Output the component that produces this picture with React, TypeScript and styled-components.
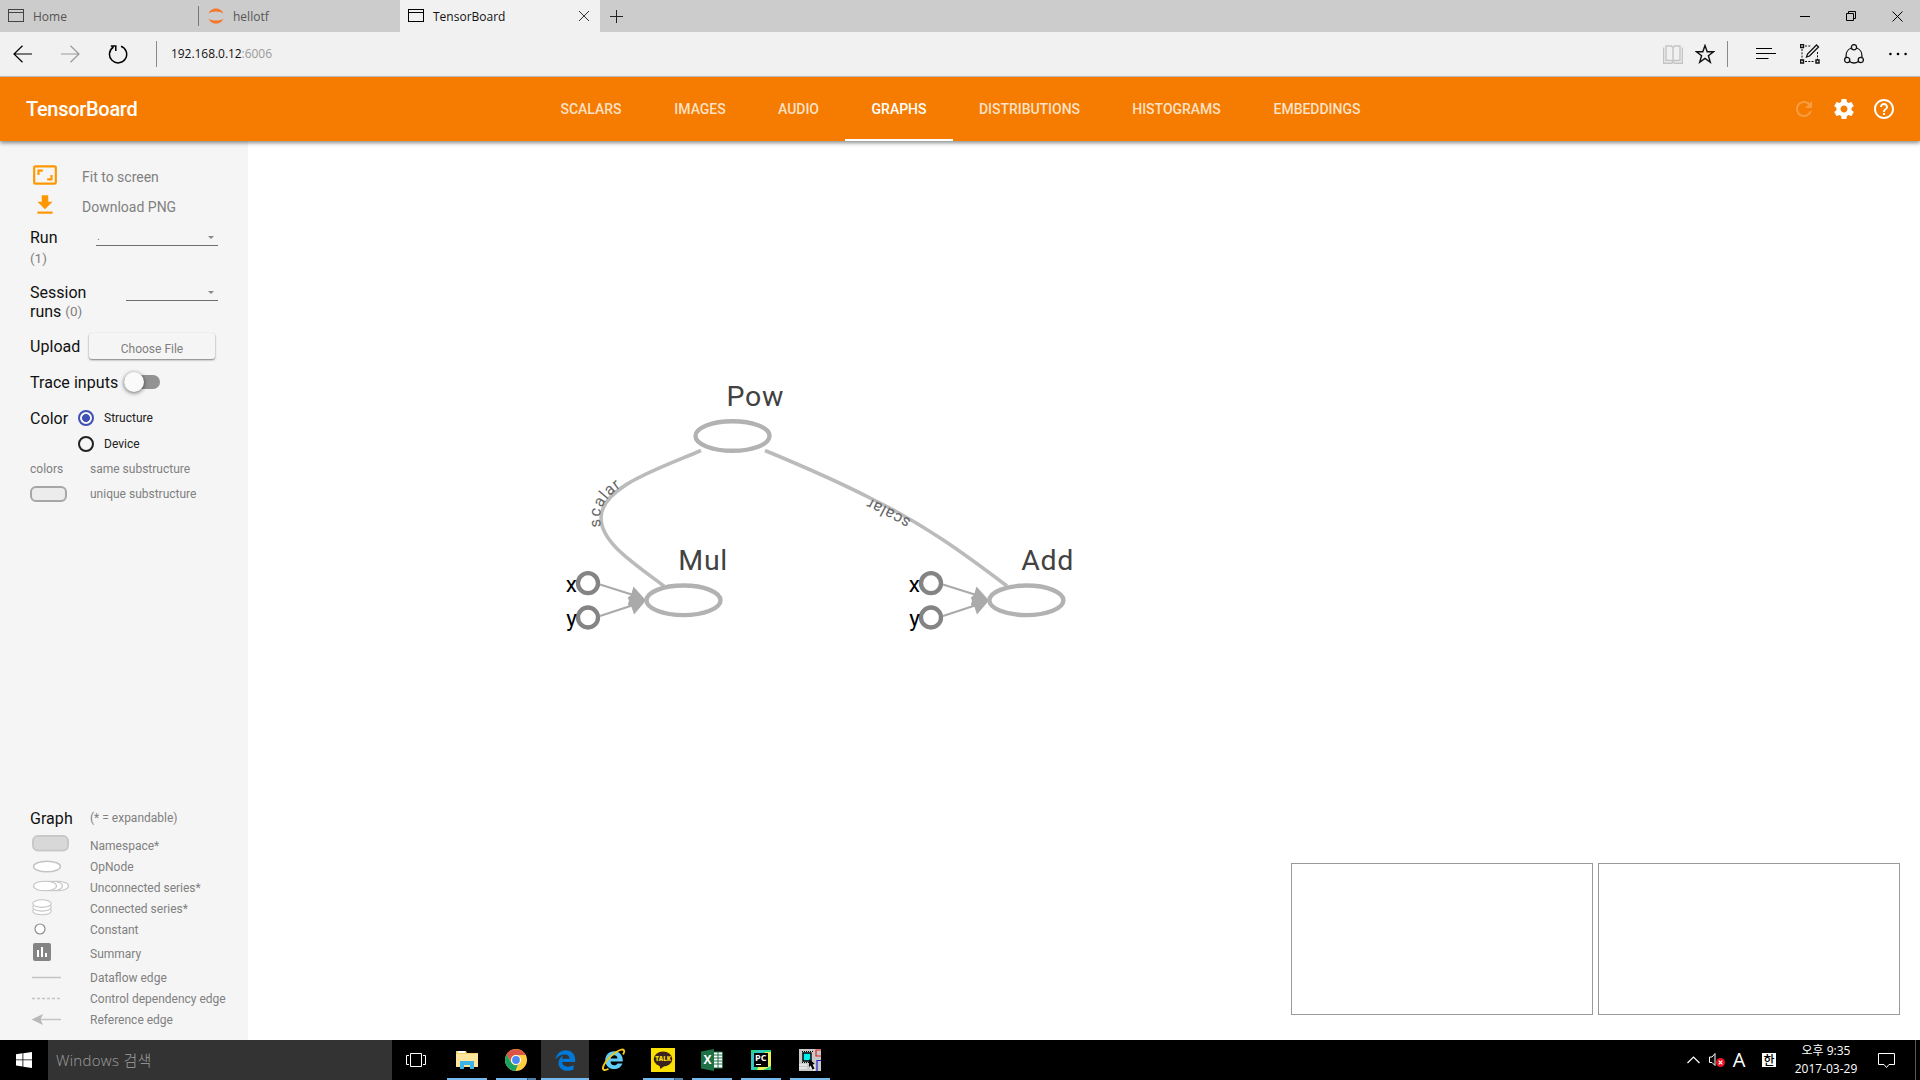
import React from 'react';
import styled, { createGlobalStyle } from 'styled-components';

const Global = createGlobalStyle`
  body { margin: 0; background: #fff; overflow: hidden; }
  * { box-sizing: border-box; }
  svg { display: block; flex: none; }
`;

const chromeFont = `"Open Sans", "Noto Sans CJK KR", sans-serif`;

const Screen = styled.div`
  width: 1920px;
  height: 1080px;
  display: flex;
  flex-direction: column;
  font-family: Roboto, sans-serif;
`;

/* ---------- browser ---------- */
const TabStrip = styled.div`
  height: 32px;
  display: flex;
  background: #cccccc;
  font: 12px ${chromeFont};
`;
const BrowserTab = styled.div<{ $active?: boolean; $w?: number }>`
  width: ${p => p.$w ?? 200}px;
  height: 32px;
  padding: 0 11px 0 8px;
  display: flex;
  align-items: center;
  gap: 9px;
  color: ${p => (p.$active ? '#111' : '#555')};
  background: ${p => (p.$active ? '#f1f1f1' : 'transparent')};
`;
const TabLabel = styled.span`
  flex: 1;
  line-height: 33px;
`;
const TabDivider = styled.div`
  width: 1px;
  height: 20px;
  margin: 6px 1px 0 0;
  background: #777;
`;
const NewTab = styled.div`
  padding: 9px 0 0 10px;
`;
const WindowButtons = styled.div`
  margin-left: auto;
  display: flex;
`;
const WindowButton = styled.div`
  width: 46px;
  height: 32px;
  display: flex;
  align-items: center;
  justify-content: center;
`;

const AddressBar = styled.div`
  height: 45px;
  display: flex;
  align-items: center;
  background: #f1f1f1;
  border-bottom: 1px solid #c4c4c8;
  font: 12px ${chromeFont};
`;
const NavButton = styled.div<{ $w: number }>`
  width: ${p => p.$w}px;
  display: flex;
  justify-content: center;
`;
const BarDivider = styled.div`
  width: 1px;
  height: 26px;
  background: #8a8a8a;
`;
const Url = styled.div`
  flex: 1;
  padding: 0 0 1px 14px;
  letter-spacing: -0.05px;
  color: #111;
  span { color: #999; }
`;

/* ---------- app header ---------- */
const Header = styled.header`
  position: relative;
  z-index: 1;
  height: 64px;
  display: flex;
  flex: none;
  align-items: center;
  background: #f57c00;
  color: #fff;
  box-shadow: 0 2px 4px rgba(0, 0, 0, 0.45);
`;
const Brand = styled.h1`
  width: 534px;
  margin: 0;
  padding-left: 26px;
  font-size: 20px;
  font-weight: 500;
  letter-spacing: -0.3px;
`;
const Tabs = styled.nav`
  display: flex;
  height: 64px;
  flex: 1;
`;
const Tab = styled.div<{ $w: number; $active?: boolean }>`
  width: ${p => p.$w}px;
  height: 64px;
  display: flex;
  align-items: center;
  justify-content: center;
  font-size: 14px;
  font-weight: 500;
  letter-spacing: -0.03px;
  color: ${p => (p.$active ? '#fff' : 'rgba(255,255,255,.78)')};
  border-top: 2px solid transparent;
  border-bottom: 2px solid ${p => (p.$active ? '#fff' : 'transparent')};
`;
const HeaderActions = styled.div`
  display: flex;
  gap: 16px;
  padding-right: 24px;
`;

/* ---------- body ---------- */
const Body = styled.main`
  height: 899px;
  display: flex;
`;
const Sidebar = styled.aside`
  width: 248px;
  height: 899px;
  padding: 19px 0 10px 30px;
  display: flex;
  flex-direction: column;
  background: #f5f5f5;
  color: #111;
  font-size: 16px;
`;
const ActionRow = styled.div<{ $h: number }>`
  height: ${p => p.$h}px;
  display: flex;
  align-items: center;
  font-size: 14px;
  color: #808080;
  svg { margin: 0 24px 0 2px; }
  span { padding-top: 4px; }
`;
const SelectRow = styled.div<{ $mt: number; $lh: number }>`
  margin-top: ${p => p.$mt}px;
  width: 188px;
  display: flex;
  justify-content: space-between;
  line-height: ${p => p.$lh}px;
`;
const SelectLabel = styled.div`
  width: 64px;
`;
const LabelLine = styled.div`
  display: flex;
  gap: 4px;
`;
const Muted = styled.span`
  color: #808080;
  font-size: 13.5px;
`;
const Dropdown = styled.div<{ $w: number }>`
  width: ${p => p.$w}px;
  height: 18px;
  padding: 1px 4px 0 1px;
  display: flex;
  justify-content: space-between;
  align-items: center;
  border-bottom: 1px solid #6f6f6f;
  font-size: 11px;
  color: #777;
`;
const Caret = styled.i`
  border: 3.5px solid transparent;
  border-top-color: #8a8a8a;
  border-bottom: 0;
`;
const ControlRow = styled.div<{ $mt: number; $h: number }>`
  margin-top: ${p => p.$mt}px;
  height: ${p => p.$h}px;
  display: flex;
  align-items: center;
`;
const ControlLabel = styled.span<{ $w: number }>`
  width: ${p => p.$w}px;
  white-space: nowrap;
  letter-spacing: 0.05px;
`;
const FileButton = styled.div`
  width: 126px;
  height: 26px;
  padding: 5px 0 0 0;
  border-radius: 3px;
  background: #f5f5f5;
  box-shadow: 0 1px 2px rgba(0, 0, 0, 0.5);
  display: flex;
  align-items: center;
  justify-content: center;
  font-size: 12px;
  color: #808080;
`;
const Toggle = styled.div`
  width: 36px;
  height: 14px;
  border-radius: 7px;
  background: #929292;
  display: flex;
  align-items: center;
`;
const Knob = styled.div`
  width: 20px;
  height: 20px;
  border-radius: 50%;
  background: #fafafa;
  box-shadow: 0 1px 4px rgba(0, 0, 0, 0.6);
`;
const Radio = styled.div<{ $on?: boolean }>`
  width: 16px;
  height: 16px;
  border-radius: 50%;
  border: 2px solid ${p => (p.$on ? '#3f51b5' : '#212121')};
  background: ${p => (p.$on ? 'radial-gradient(circle, #3f51b5 3.6px, transparent 4.3px)' : 'transparent')};
`;
const RadioLabel = styled.span`
  margin-left: 10px;
  font-size: 12px;
  color: #212121;
`;
const Note = styled.span<{ $w?: number }>`
  width: ${p => (p.$w ? `${p.$w}px` : 'auto')};
  font-size: 12px;
  color: #808080;
`;
const Swatch = styled.div`
  width: 37px;
  height: 16px;
  margin-right: 23px;
  border: 2px solid #a6a6a6;
  border-radius: 6px;
  background: #ececec;
`;
const Legend = styled.div`
  margin-top: auto;
`;
const LegendTitle = styled.div`
  height: 20px;
  margin-bottom: 7px;
  display: flex;
  align-items: center;
`;
const LegendRow = styled.div<{ $h?: number }>`
  height: ${p => p.$h ?? 21}px;
  display: flex;
  align-items: center;
  font-size: 12px;
  color: #808080;
  svg { margin-right: 14px; }
`;

const Canvas = styled.section`
  flex: 1;
  display: grid;
  background: #fff;
  > * { grid-area: 1 / 1; }
`;
const Minimaps = styled.div`
  align-self: end;
  justify-self: end;
  display: flex;
  gap: 5px;
  margin: 0 20px 25px 0;
`;
const Minimap = styled.div`
  width: 302px;
  height: 152px;
  border: 1px solid #999;
`;

/* ---------- taskbar ---------- */
const Taskbar = styled.footer`
  height: 40px;
  display: flex;
  background: #000;
  font-family: ${chromeFont};
`;
const Start = styled.div`
  width: 48px;
  display: flex;
  align-items: center;
  justify-content: center;
`;
const Search = styled.div`
  width: 344px;
  padding-left: 8px;
  background: #333;
  color: #a0a0a0;
  font: 300 15px/40px ${chromeFont};
  letter-spacing: 0.3px;
`;
const Apps = styled.div`
  display: flex;
  gap: 1px;
`;
const App_ = styled.div<{ $active?: boolean }>`
  width: 48px;
  height: 40px;
  display: flex;
  flex-direction: column;
  align-items: center;
  justify-content: space-between;
  background: ${p => (p.$active ? '#333' : 'transparent')};
`;
const AppIcon = styled.div`
  height: 38px;
  display: flex;
  align-items: center;
  padding-top: 2px;
`;
const Underline = styled.div<{ $kind: 'none' | 'one' | 'many' | 'full' }>`
  height: 2px;
  width: ${p => (p.$kind === 'full' ? 48 : 40)}px;
  background: ${p =>
    p.$kind === 'none' ? 'transparent'
      : p.$kind === 'many' ? 'linear-gradient(90deg, #76b9ed 31px, #33516a 31px 32px, #5080a8 32px)'
      : '#76b9ed'};
`;
const Tray = styled.div`
  margin-left: auto;
  display: flex;
  align-items: center;
  color: #fff;
`;
const TraySlot = styled.div<{ $w: number }>`
  width: ${p => p.$w}px;
  display: flex;
  justify-content: center;
`;
const Latin = styled.span`
  font-size: 20px;
  line-height: 38px;
`;
const Hangul = styled.span`
  width: 14px;
  height: 14px;
  background: #fff;
  color: #000;
  font: 500 12px/13px "Noto Sans CJK KR", sans-serif;
  text-align: center;
`;
const Clock = styled.div`
  font-size: 12px;
  line-height: 18px;
  padding: 0 0 1px 4px;
  text-align: center;
  white-space: nowrap;
`;
const DesktopEdge = styled.div`
  width: 5px;
  height: 40px;
  margin-left: 2px;
  border-left: 1px solid #555;
`;

const Mi = ({ d, size = 24, fill = '#fff', opacity = 1 }: { d: string; size?: number; fill?: string; opacity?: number }) => (
  <svg width={size} height={size} viewBox="0 0 24 24" fill={fill} opacity={opacity}><path d={d} /></svg>
);

const ICONS = {
  refresh: 'M17.65 6.35C16.2 4.9 14.21 4 12 4c-4.42 0-7.99 3.58-7.99 8s3.57 8 7.99 8c3.73 0 6.84-2.55 7.73-6h-2.08c-.82 2.33-3.04 4-5.65 4-3.31 0-6-2.69-6-6s2.69-6 6-6c1.66 0 3.14.69 4.22 1.78L13 11h7V4l-2.35 2.35z',
  settings: 'M19.43 12.98c.04-.32.07-.64.07-.98s-.03-.66-.07-.98l2.11-1.65c.19-.15.24-.42.12-.64l-2-3.46c-.12-.22-.39-.3-.61-.22l-2.49 1c-.52-.4-1.08-.73-1.69-.98l-.38-2.65C14.46 2.18 14.25 2 14 2h-4c-.25 0-.46.18-.49.42l-.38 2.65c-.61.25-1.17.59-1.69.98l-2.49-1c-.23-.09-.49 0-.61.22l-2 3.46c-.13.22-.07.49.12.64l2.11 1.65c-.04.32-.07.65-.07.98s.03.66.07.98l-2.11 1.65c-.19.15-.24.42-.12.64l2 3.46c.12.22.39.3.61.22l2.49-1c.52.4 1.08.73 1.69.98l.38 2.65c.03.24.24.42.49.42h4c.25 0 .46-.18.49-.42l.38-2.65c.61-.25 1.17-.59 1.69-.98l2.49 1c.23.09.49 0 .61-.22l2-3.46c.12-.22.07-.49-.12-.64l-2.11-1.65zM12 15.5c-1.93 0-3.5-1.57-3.5-3.5s1.57-3.5 3.5-3.5 3.5 1.57 3.5 3.5-1.57 3.5-3.5 3.5z',
  help: 'M11 18h2v-2h-2v2zm1-16C6.48 2 2 6.48 2 12s4.48 10 10 10 10-4.48 10-10S17.52 2 12 2zm0 18c-4.41 0-8-3.59-8-8s3.59-8 8-8 8 3.59 8 8-3.59 8-8 8zm0-14c-2.21 0-4 1.79-4 4h2c0-1.1.9-2 2-2s2 .9 2 2c0 2-3 1.75-3 5h2c0-2.25 3-2.5 3-5 0-2.21-1.79-4-4-4z',
  fit: 'M19 12h-2v3h-3v2h5v-5zM7 9h3V7H5v5h2V9zm14-6H3c-1.1 0-2 .9-2 2v14c0 1.1.9 2 2 2h18c1.1 0 2-.9 2-2V5c0-1.1-.9-2-2-2zm0 16.01H3V4.99h18v14.02z',
  download: 'M19 9h-4V3H9v6H5l7 7 7-7zM5 18v2h14v-2H5z',
};

const PageIcon = ({ color }: { color: string }) => (
  <svg width="16" height="14" viewBox="0 0 16 14" fill="none" stroke={color}>
    <rect x=".5" y=".5" width="15" height="12" /><path d="M0 3.5h16" />
  </svg>
);
const JupyterIcon = () => (
  <svg width="16" height="16" viewBox="0 0 16 16" fill="#f37726">
    <path d="M.6 5.6C1.6 2.6 4.5.4 8 .4s6.400 2.200 7.400 5.200C13.900 4.200 11.200 3.400 8 3.400S2.100 4.200.6 5.600zM.6 10.400c1 3 3.900 5.200 7.400 5.200s6.400-2.200 7.400-5.200c-1.500 1.400-4.200 2.200-7.400 2.200s-5.900-.8-7.400-2.200z" />
  </svg>
);
const Arrow = ({ flip, color }: { flip?: boolean; color: string }) => (
  <svg width="20" height="18" viewBox="0 0 20 18" fill="none" stroke={color} strokeWidth="1.2" transform={flip ? 'scale(-1 1)' : undefined}>
    <path d="M1 9h18M9.500.7L1 9l8.500 8.300" />
  </svg>
);

const GraphNode = ({ x, y, label, lx, ly }: { x: number; y: number; label: string; lx: number; ly: number }) => (
  <g>
    <ellipse cx={x} cy={y} rx="37" ry="14.800" fill="#fff" stroke="#b2b2b2" strokeWidth="4.400" />
    <text x={lx} y={ly} fontSize="28.500" letterSpacing="0.700" fill="#424242">{label}</text>
  </g>
);
const Inputs = ({ x }: { x: number }) => (
  <g transform={`translate(${x} 0)`}>
    <g stroke="#aaa" strokeWidth="2.200">
      <path d="M12 584.500L50 596.500M12 616L50 603.500" />
    </g>
    <path d="M45.500 586.500L58 600.500 46 614.500 43.500 607 39.800 605 41 600.500 39.800 597.500 43 595z" fill="#aaa" />
    {[['x', 583.200], ['y', 617.500]].map(([t, cy]) => (
      <g key={t}>
        <circle cx="0" cy={cy} r="10" fill="#fff" stroke="#848484" strokeWidth="4.300" />
        <text x="-11" y={Number(cy) + 8.300} fontSize="22.500" textAnchor="end" fill="#000">{t}</text>
      </g>
    ))}
  </g>
);

const legendIcon: Record<string, React.ReactNode> = {
  'Namespace*': <rect x="3" y="1" width="35" height="14.500" rx="5" fill="#d8d8d8" stroke="#c8c8c8" strokeWidth="2" />,
  OpNode: <ellipse cx="17" cy="10.500" rx="13.500" ry="5.300" fill="#fff" stroke="#c4c4c4" strokeWidth="1.400" />,
  'Unconnected series*': (
    <g fill="#fff" stroke="#c4c4c4" strokeWidth="1.100">
      <ellipse cx="27" cy="9" rx="11.500" ry="4.800" /><ellipse cx="21.500" cy="9" rx="11" ry="4.800" /><ellipse cx="15" cy="9" rx="11.500" ry="4.800" />
    </g>
  ),
  'Connected series*': (
    <g fill="#fff" stroke="#c4c4c4" strokeWidth="1.100">
      <ellipse cx="12" cy="13" rx="9.300" ry="3.800" /><ellipse cx="12" cy="9.300" rx="9.300" ry="3.800" /><ellipse cx="12" cy="5.600" rx="9.300" ry="3.800" />
    </g>
  ),
  Constant: <circle cx="10" cy="10" r="5" fill="#fff" stroke="#8c8c8c" strokeWidth="1.200" />,
  Summary: (
    <g transform="translate(0 -1.5)">
      <rect x="3" y="1.500" width="18" height="18" rx="2" fill="#848484" /><path d="M7 8.500h2v7H7zM11 5.500h2v10h-2zM15 11.500h2v4h-2z" fill="#fff" />
    </g>
  ),
  'Dataflow edge': <path d="M2 10.500h29" stroke="#c4c4c4" strokeWidth="1.500" />,
  'Control dependency edge': <path d="M2 10.500h29" stroke="#c4c4c4" strokeWidth="1.500" strokeDasharray="3 2" />,
  'Reference edge': <g><path d="M8 10.500h23" stroke="#c4c4c4" strokeWidth="1.500" /><path d="M1.500 10.500L13 5l-2.500 5.500L13 16z" fill="#b8b8b8" /></g>,
};

const apps: { name: string; kind: 'none' | 'one' | 'many' | 'full'; icon: React.ReactNode }[] = [
  { name: 'explorer', kind: 'one', icon: (
    <svg width="22" height="20" viewBox="0 0 22 20">
      <path d="M0 1h10l1 2h11v14H0z" fill="#f5cf6b" /><path d="M2 1h7v2H2z" fill="#fff" /><path d="M0 4h22v13H0z" fill="#fde59b" />
      <path d="M4 11h14v8h-4v-4H8v4H4z" fill="#3db4e7" />
    </svg>) },
  { name: 'chrome', kind: 'many', icon: (
    <svg width="22" height="22" viewBox="0 0 22 22">
      <circle cx="11" cy="11" r="11" fill="#ffcd40" />
      <path d="M1.500 5.500A11 11 0 0 1 20.600 6H11a5 5 0 0 0-4.700 6.700z" fill="#de5347" />
      <path d="M1.500 5.500l4.900 8a5 5 0 0 0 6.500 2L10.400 22A11 11 0 0 1 1.500 5.500z" fill="#1aa260" />
      <circle cx="11" cy="11" r="5" fill="#fff" /><circle cx="11" cy="11" r="3.900" fill="#4a89f3" />
    </svg>) },
  { name: 'edge', kind: 'full', icon: (
    <svg width="21" height="21" viewBox="0 0 21 21" fill="#0078d7">
      <path d="M.6 9.600C1.200 4 5.300.3 10.800.3c5.800 0 9.400 4 9.400 9.200v2.600H7.200c.2 3 2.700 4.600 5.800 4.600 2.100 0 4-.5 5.700-1.600v4.200c-1.900 1-4.100 1.500-6.500 1.500-5 0-8.700-3-8.700-7.800 0-3.500 1.900-6.100 4.900-7.400-.7.800-1.200 1.900-1.300 3.100h7.300c0-2.500-1.400-4.200-4.300-4.200C6 4.500 2.600 6.400.6 9.600z" />
    </svg>) },
  { name: 'ie', kind: 'none', icon: (
    <svg width="24" height="24" viewBox="0 0 24 24">
      <path d="M12 3.300c-5 0-8.800 3.900-8.800 8.900s3.800 8.900 8.900 8.900c4 0 7.100-2.200 8.300-5.700h-5c-.6 1.200-1.700 1.900-3.200 1.900-2.100 0-3.600-1.400-3.700-3.700h12.300c.4-6-3-10.300-8.800-10.300zM8.600 10.400c.3-2 1.700-3.200 3.500-3.200s3.200 1.200 3.400 3.200z" fill="#5fcdf7" />
      <path d="M21 6.500C23 3.500 22.500 1 19.500 1.600 13 3 2 13.500 1 19.500c-.5 3.500 3 2.800 5.500 1.200" fill="none" stroke="#f5c518" strokeWidth="1.900" />
    </svg>) },
  { name: 'talk', kind: 'many', icon: (
    <svg width="24" height="24" viewBox="0 0 24 24">
      <path d="M0 0h24v24H0z" fill="#fae100" /><ellipse cx="12" cy="11" rx="9.300" ry="7.600" fill="#3b2220" /><path d="M8 16l1.500 5 5-4z" fill="#3b2220" />
      <text x="12" y="13.300" fontSize="6" fontWeight="800" textAnchor="middle" fill="#fae100">TALK</text>
    </svg>) },
  { name: 'excel', kind: 'one', icon: (
    <svg width="22" height="22" viewBox="0 0 22 22">
      <path d="M12 3h9.500v16H12z" fill="#fff" stroke="#1e7145" /><path d="M13 6h8M13 9h8M13 12h8M13 15h8M17 3v16" stroke="#1e7145" />
      <path d="M0 2.500L13 0v22L0 19.500z" fill="#1e7145" /><text x="6.500" y="15" fontSize="12" fontWeight="700" textAnchor="middle" fill="#fff">X</text>
    </svg>) },
  { name: 'pycharm', kind: 'one', icon: (
    <svg width="20" height="20" viewBox="0 0 20 20">
      <path d="M0 0h20v20H0z" fill="#21d789" /><path d="M14 2h6v14l-8 4H6z" fill="#e9f25a" /><path d="M0 4l8-4h6L3 20H0z" fill="#3bc6c0" /><path d="M3 3h14v14H3z" fill="#000" />
      <text x="4" y="11.300" fontSize="9" fontWeight="700" fill="#fff">PC</text><path d="M5 14.500h5" stroke="#fff" />
    </svg>) },
  { name: 'circuit', kind: 'one', icon: (
    <svg width="22" height="22" viewBox="0 0 22 22">
      <path d="M0 0h22v22H0z" fill="#c9c9c9" /><path d="M0 16h8M0 19h8M12 2v18M15 14v8" stroke="#fff" />
      <path d="M4 4h8v8H4z" fill="#00f0f0" stroke="#000" strokeWidth="1.500" /><path d="M3 2.500h11M3 13.500h9" stroke="#000" strokeDasharray="1 1" />
      <path d="M22 1h-5v6h5" fill="none" stroke="#e02020" strokeWidth="1.200" /><path d="M22 11.500h-4V22" fill="none" stroke="#2020d0" strokeWidth="1.200" />
      <path d="M10 10l6 5-2.500.5 2 4-2 1-1.800-4L10 18z" fill="#000" />
    </svg>) },
];

const tabs: [string, number][] = [
  ['SCALARS', 114], ['IMAGES', 104], ['AUDIO', 93], ['GRAPHS', 108], ['DISTRIBUTIONS', 153], ['HISTOGRAMS', 141], ['EMBEDDINGS', 140],
];

export default function App() {
  return (
    <Screen>
      <Global />
      <TabStrip>
        <BrowserTab $w={198}><PageIcon color="#444" /><TabLabel>Home</TabLabel></BrowserTab>
        <TabDivider />
        <BrowserTab><JupyterIcon /><TabLabel>hellotf</TabLabel></BrowserTab>
        <BrowserTab $active>
          <PageIcon color="#000" /><TabLabel>TensorBoard</TabLabel>
          <svg width="10" height="10" viewBox="0 0 10 10" stroke="#333"><path d="M0 0l10 10M10 0L0 10" /></svg>
        </BrowserTab>
        <NewTab><svg width="13" height="14" viewBox="0 0 13 14" stroke="#222"><path d="M0 7.500h13M6.500 1v13" /></svg></NewTab>
        <WindowButtons>
          <WindowButton><svg width="10" height="10" stroke="#000"><path d="M0 5.500h10" /></svg></WindowButton>
          <WindowButton><svg width="10" height="10" stroke="#000" fill="none"><path d="M.5 2.500h7v7h-7zM2.500 2.500v-2h7v7h-2" /></svg></WindowButton>
          <WindowButton><svg width="11" height="11" stroke="#000"><path d="M.5.5l10 10M10.500.5l-10 10" /></svg></WindowButton>
        </WindowButtons>
      </TabStrip>

      <AddressBar>
        <NavButton $w={45}><Arrow color="#000" /></NavButton>
        <NavButton $w={49}><Arrow flip color="#999" /></NavButton>
        <NavButton $w={48}>
          <svg width="20" height="20" viewBox="0 0 20 20" fill="none" stroke="#000" strokeWidth="1.500">
            <path d="M13 2.200A8.600 8.600 0 1 1 5.500 3M2.800 2h5v5" />
          </svg>
        </NavButton>
        <NavButton $w={14} />
        <BarDivider />
        <Url>192.168.0.12<span>:6006</span></Url>
        <NavButton $w={32}>
          <svg width="20" height="19" viewBox="0 0 20 19" fill="none" stroke="#c4c4c4" strokeWidth="1.400">
            <path d="M.6 2.500v15.800h8l1.400-.8 1.400.8h8V2.500M3 1h5.500L10 2.500 11.500 1H17v14.500h-5.500L10 16.800l-1.500-1.300H3zM10 2.500v15" />
          </svg>
        </NavButton>
        <NavButton $w={32}>
          <svg width="20" height="20" viewBox="0 0 20 20" fill="none" stroke="#111" strokeWidth="1.400">
            <path d="M10 1.500l2.200 6.200h6.300l-5.100 4 1.900 6.500L10 14.400l-5.300 3.800 1.900-6.500-5.100-4h6.300z" />
          </svg>
        </NavButton>
        <NavButton $w={6} />
        <BarDivider />
        <NavButton $w={16} />
        <NavButton $w={44}>
          <svg width="20" height="14" viewBox="0 0 20 14" stroke="#000" strokeWidth="1.200"><path d="M0 1.500h16M0 6.500h20M0 11.500h12.500" /></svg>
        </NavButton>
        <NavButton $w={44}>
          <svg width="20" height="20" viewBox="0 0 20 20" fill="none" stroke="#111">
            <path d="M2 5v11M17.500 8v8M5 2h6M5 17.500h10" strokeDasharray="2 1.300" />
            <path d="M.5.5h3v3h-3zM.5 16h3v3h-3zM16 16h3v3h-3z" strokeWidth="1.400" />
            <path d="M6.500 13l1-3L16.500 1l2 2-9 9z" strokeWidth="1.300" />
          </svg>
        </NavButton>
        <NavButton $w={44}>
          <svg width="20" height="20" viewBox="0 0 20 20" fill="none" stroke="#111" strokeWidth="1.300">
            <circle cx="10" cy="3.200" r="2.600" /><circle cx="3.200" cy="16" r="2.600" /><circle cx="16.800" cy="16" r="2.600" />
            <path d="M7.400 4C3.800 5.300 1.500 9 2.200 13.400M12.600 4c3.600 1.300 5.900 5 5.200 9.400M5.500 17.500q4.500 3 9 0" />
          </svg>
        </NavButton>
        <NavButton $w={44}>
          <svg width="18" height="4" viewBox="0 0 18 4"><circle cx="1.400" cy="2" r="1.300" /><circle cx="9" cy="2" r="1.300" /><circle cx="16.600" cy="2" r="1.300" /></svg>
        </NavButton>
      </AddressBar>

      <Header>
        <Brand>TensorBoard</Brand>
        <Tabs>{tabs.map(([t, w]) => <Tab key={t} $w={w} $active={t === 'GRAPHS'}>{t}</Tab>)}</Tabs>
        <HeaderActions>
          <Mi d={ICONS.refresh} opacity={0.25} />
          <Mi d={ICONS.settings} />
          <Mi d={ICONS.help} />
        </HeaderActions>
      </Header>

      <Body>
        <Sidebar>
          <ActionRow $h={30}><Mi d={ICONS.fit} size={26} fill="#ff9800" /><span>Fit to screen</span></ActionRow>
          <ActionRow $h={30}><Mi d={ICONS.download} size={26} fill="#ff9800" /><span>Download PNG</span></ActionRow>
          <SelectRow $mt={8} $lh={20}>
            <SelectLabel>
              <LabelLine>Run</LabelLine>
              <LabelLine><Muted>(1)</Muted></LabelLine>
            </SelectLabel>
            <Dropdown $w={122}>.<Caret /></Dropdown>
          </SelectRow>
          <SelectRow $mt={15} $lh={19}>
            <SelectLabel>
              <LabelLine>Session</LabelLine>
              <LabelLine>runs <Muted>(0)</Muted></LabelLine>
            </SelectLabel>
            <Dropdown $w={92}><span /><Caret /></Dropdown>
          </SelectRow>
          <ControlRow $mt={11} $h={28}><ControlLabel $w={59}>Upload</ControlLabel><FileButton>Choose File</FileButton></ControlRow>
          <ControlRow $mt={12} $h={20}><ControlLabel $w={94}>Trace inputs</ControlLabel><Toggle><Knob /></Toggle></ControlRow>
          <ControlRow $mt={16} $h={20}><ControlLabel $w={48}>Color</ControlLabel><Radio $on /><RadioLabel>Structure</RadioLabel></ControlRow>
          <ControlRow $mt={6} $h={20}><ControlLabel $w={48} /><Radio /><RadioLabel>Device</RadioLabel></ControlRow>
          <ControlRow $mt={5} $h={20}><Note $w={60}>colors</Note><Note>same substructure</Note></ControlRow>
          <ControlRow $mt={5} $h={20}><Swatch /><Note>unique substructure</Note></ControlRow>
          <Legend>
            <LegendTitle><ControlLabel $w={60}>Graph</ControlLabel><Note>(* = expandable)</Note></LegendTitle>
            {Object.entries(legendIcon).map(([t, icon]) => (
              <LegendRow key={t} $h={t === 'Summary' ? 27 : 21}>
                <svg width="46" height="21" viewBox="0 0 46 21" overflow="visible">{icon}</svg>{t}
              </LegendRow>
            ))}
          </Legend>
        </Sidebar>
        <Canvas>
          <svg width="1672" height="899" viewBox="248 141 1672 899">
            <g fill="none" stroke="#bbb" strokeWidth="3.600">
              <path id="edge-mul" d="M664 586C632 562 601 542 601 518C601 487 658 469 701 450.500" />
              <path id="edge-add" d="M1007 586C962 552 925 525 872 499C837 481 800 465 765 450.500" />
            </g>
            <g fontSize="16" letterSpacing="0.700" fill="#666" textAnchor="middle">
              <text dy="-1"><textPath href="#edge-mul" startOffset="50%">scalar</textPath></text>
              <text><textPath href="#edge-add" startOffset="50.300%">scalar</textPath></text>
            </g>
            <Inputs x={588} />
            <Inputs x={931} />
            <GraphNode x={732.5} y={436} label="Pow" lx={726.500} ly={406} />
            <GraphNode x={683.5} y={600.300} label="Mul" lx={678.300} ly={570} />
            <GraphNode x={1026.400} y={600.300} label="Add" lx={1021.300} ly={570} />
          </svg>
          <Minimaps><Minimap /><Minimap /></Minimaps>
        </Canvas>
      </Body>

      <Taskbar>
        <Start>
          <svg width="16" height="16" viewBox="0 0 16 16" fill="#fff"><path d="M0 2.200L6.500 1.300v6.200H0zM7.300 1.200L16 0v7.500H7.300zM0 8.300h6.500v6.200L0 13.600zM7.300 8.300H16V16l-8.700-1.200z" /></svg>
        </Start>
        <Search>Windows 검색</Search>
        <Apps>
          <App_>
            <AppIcon><svg width="20" height="14" viewBox="0 0 20 14" fill="none" stroke="#fff"><path d="M4.500.5h11v13h-11zM3 2.500H.5v9H3M17 2.500h2.500v9H17" /></svg></AppIcon>
          </App_>
          <span />
          <span />
          {apps.map(a => (
            <App_ key={a.name} $active={a.kind === 'full'}>
              <AppIcon>{a.icon}</AppIcon>
              <Underline $kind={a.kind} />
            </App_>
          ))}
        </Apps>
        <Tray>
          <TraySlot $w={24}><svg width="13" height="8" viewBox="0 0 13 8" fill="none" stroke="#fff" strokeWidth="1.200"><path d="M.5 7l6-6 6 6" /></svg></TraySlot>
          <TraySlot $w={24}>
            <svg width="18" height="16" viewBox="0 0 18 16" fill="none" stroke="#fff">
              <path d="M1.500 5v5.500H4l3 3V1.500L4 5z" /><circle cx="12.500" cy="10.500" r="4.500" fill="#e81123" stroke="none" />
              <path d="M10.700 8.700l3.600 3.600M14.300 8.700l-3.600 3.600" strokeWidth="1.200" />
            </svg>
          </TraySlot>
          <TraySlot $w={20}><Latin>A</Latin></TraySlot>
          <TraySlot $w={40}><Hangul>한</Hangul></TraySlot>
          <TraySlot $w={70}><Clock>오후 9:35<br />2017-03-29</Clock></TraySlot>
          <TraySlot $w={54}>
            <svg width="17" height="17" viewBox="0 0 17 17" fill="none" stroke="#fff"><path d="M.5 1.500h16v11H11L8.500 15.500 6 12.500H.5z" /></svg>
          </TraySlot>
          <DesktopEdge />
        </Tray>
      </Taskbar>
    </Screen>
  );
}
